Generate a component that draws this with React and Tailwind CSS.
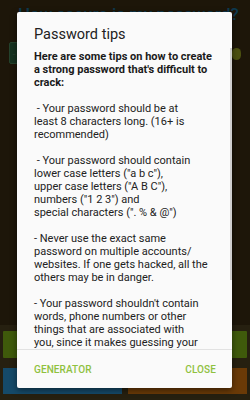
const lines = [
  " - Your password should be at",
  "least 8 characters long. (16+ is",
  "recommended)",
  "",
  " - Your password should contain",
  "lower case letters (\"a b c\"),",
  "upper case letters (\"A B C\"),",
  "numbers (\"1 2 3\") and",
  "special characters (\". % & @\")",
  "",
  "- Never use the exact same",
  "password on multiple accounts/",
  "websites. If one gets hacked, all the",
  "others may be in danger.",
  "",
  "- Your password shouldn't contain",
  "words, phone numbers or other",
  "things that are associated with",
  "you, since it makes guessing your",
];

const App = () => {
  return (
    <div className="relative w-[250px] h-[400px] overflow-hidden bg-[#1d1609] font-['Roboto',sans-serif]">
      {/* dimmed app behind the dialog */}
      <div className="flex flex-col h-full">
        <div className="pl-[18px] pt-[2px] h-[30px] text-[17px] font-medium text-[#0d3a50] whitespace-nowrap">
          How secure is my password?
        </div>
        <div className="flex justify-between items-start mt-[12px] h-[270px]">
          <div className="ml-[9px] w-[10px] h-[22px] rounded-[2px] bg-[#163220] border border-[#25432d] flex items-center justify-center text-[6px] text-[#5a6b55]">
            ··
          </div>
          <div className="mr-[9px] mt-[6px] w-[9px] h-[12px] rounded-full bg-[#4b5010]"></div>
        </div>
        <div className="mt-[13px] bg-[#262010] px-[3px] py-[6px]">
          <div className="h-[27px] bg-[#3f5a0b] rounded-[1px]"></div>
        </div>
        <div className="flex gap-[6px] bg-[#262010] px-[3px] pt-[4px] pb-[6px]">
          <div className="flex-1 h-[26px] bg-[#154a69]"></div>
          <div className="flex-1 h-[26px] bg-[#6a3a07]"></div>
        </div>
      </div>

      {/* dialog */}
      <div className="absolute left-[17px] top-[12px] w-[215px] h-[376px] bg-[#fafafa] rounded-[2px] shadow-[0_2px_6px_rgba(0,0,0,0.5)] flex flex-col">
        <div className="pl-[17px] pt-[14px] pb-[4px] text-[14.5px] leading-[18px] text-[#212121]">
          Password tips
        </div>
        <div className="relative flex-1 overflow-hidden pl-[17px] pt-[2px] text-[11px] leading-[13px] text-[#222222]">
          <div className="font-bold text-[#1a1a1a]">
            <div>Here are some tips on how to create</div>
            <div>a strong password that's difficult to</div>
            <div>crack:</div>
          </div>
          <div className="h-[13px]"></div>
          {lines.map((line, i) => (
            <div key={i} className="whitespace-pre h-[13px]">
              {line}
            </div>
          ))}
          <div className="absolute right-0 top-0 w-[2px] h-[232px] bg-[#cfcfcf]"></div>
        </div>
        <div className="h-[39px] border-t border-[#e2e2e2] flex items-center justify-between pl-[17px] pr-[16px] text-[10px] font-medium tracking-[0.1px] text-[#8fc13e]">
          <span>GENERATOR</span>
          <span>CLOSE</span>
        </div>
      </div>
    </div>
  );
};

export default App;
